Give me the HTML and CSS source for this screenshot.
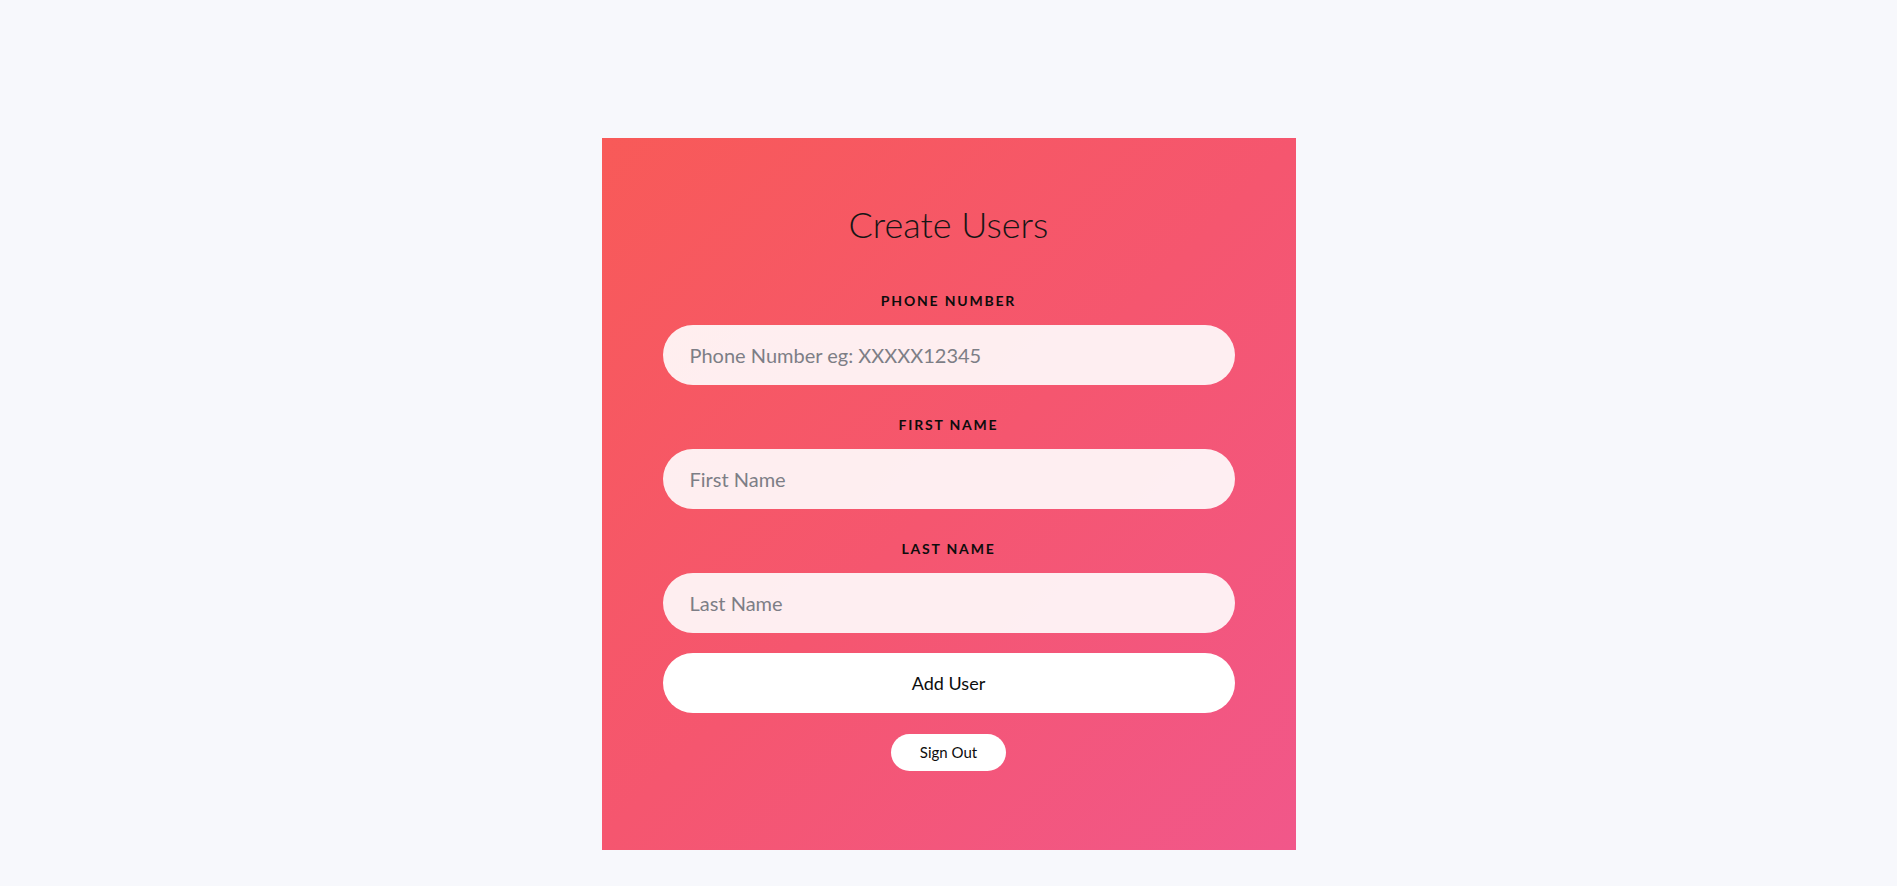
FILE: index.html
```html
<!DOCTYPE html>
<html lang="en">
<head>
<meta charset="utf-8">
<title>Create Users</title>
<link rel="stylesheet" href="styles.css">
</head>
<body>
<main class="page">
  <form class="card">
    <h1 class="title">Create Users</h1>
    <div class="field">
      <label class="label" for="phone">Phone Number</label>
      <input class="input" id="phone" type="text" placeholder="Phone Number eg: XXXXX12345">
    </div>
    <div class="field">
      <label class="label" for="first">First Name</label>
      <input class="input" id="first" type="text" placeholder="First Name">
    </div>
    <div class="field">
      <label class="label" for="last">Last Name</label>
      <input class="input" id="last" type="text" placeholder="Last Name">
    </div>
    <button class="btn-add" type="button">Add User</button>
    <button class="btn-signout" type="button">Sign Out</button>
  </form>
</main>
</body>
</html>
```

FILE: styles.css
```css
* { box-sizing: border-box; }

html, body {
  margin: 0;
  padding: 0;
}

body {
  background: #f7f8fc;
  font-family: Lato, "Noto Sans", sans-serif;
  min-height: 886px;
}

.page {
  display: flex;
  justify-content: center;
  padding-top: 138px;
}

.card {
  width: 694px;
  height: 712px;
  padding: 65px 61px 0;
  background: linear-gradient(135deg, #f85a58 0%, #f5566f 50%, #f1578a 100%);
  display: flex;
  flex-direction: column;
  align-items: stretch;
}

.title {
  margin: 0 0 47px;
  font-family: Lato, sans-serif;
  font-weight: 300;
  font-size: 36px;
  line-height: 1.2;
  text-align: center;
  color: #161616;
}

.field {
  display: flex;
  flex-direction: column;
  gap: 15px;
  margin-bottom: 32px;
}

.field:nth-of-type(3) {
  margin-bottom: 20px;
}

.label {
  font-family: Lato, sans-serif;
  font-weight: 700;
  font-size: 14px;
  line-height: 1.2;
  letter-spacing: 1.8px;
  text-transform: uppercase;
  text-align: center;
  color: #0d0d0d;
}

.input {
  height: 60px;
  width: 100%;
  border: none;
  outline: none;
  border-radius: 30px;
  padding: 0 27px;
  background: rgba(255, 255, 255, 0.9);
  font-family: Lato, sans-serif;
  font-size: 20px;
  color: #333;
}

.input::placeholder {
  color: #7d7e86;
}

.btn-add {
  height: 60px;
  width: 100%;
  border: none;
  border-radius: 30px;
  background: #fff;
  font-family: Lato, sans-serif;
  font-size: 18px;
  color: #0d0d0d;
  cursor: pointer;
  margin-bottom: 21px;
}

.btn-signout {
  align-self: center;
  width: 115px;
  height: 37px;
  border: none;
  border-radius: 19px;
  background: #fff;
  font-family: Lato, sans-serif;
  font-size: 15px;
  color: #0d0d0d;
  cursor: pointer;
}
```
